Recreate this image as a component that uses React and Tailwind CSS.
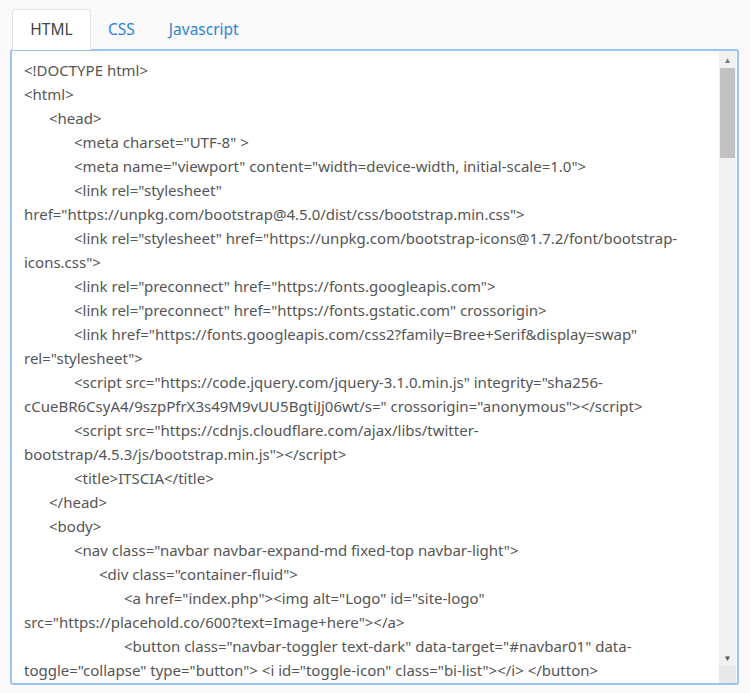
const code = `<!DOCTYPE html>
<html>
\t<head>
\t\t<meta charset="UTF-8" >
\t\t<meta name="viewport" content="width=device-width, initial-scale=1.0">
\t\t<link rel="stylesheet" href="https://unpkg.com/bootstrap@4.5.0/dist/css/bootstrap.min.css">
\t\t<link rel="stylesheet" href="https://unpkg.com/bootstrap-icons@1.7.2/font/bootstrap-icons.css">
\t\t<link rel="preconnect" href="https://fonts.googleapis.com">
\t\t<link rel="preconnect" href="https://fonts.gstatic.com" crossorigin>
\t\t<link href="https://fonts.googleapis.com/css2?family=Bree+Serif&display=swap" rel="stylesheet">
\t\t<script src="https://code.jquery.com/jquery-3.1.0.min.js" integrity="sha256-cCueBR6CsyA4/9szpPfrX3s49M9vUU5BgtiJj06wt/s=" crossorigin="anonymous"></script>
\t\t<script src="https://cdnjs.cloudflare.com/ajax/libs/twitter-bootstrap/4.5.3/js/bootstrap.min.js"></script>
\t\t<title>ITSCIA</title>
\t</head>
\t<body>
\t\t<nav class="navbar navbar-expand-md fixed-top navbar-light">
\t\t\t<div class="container-fluid">
\t\t\t\t<a href="index.php"><img alt="Logo" id="site-logo" src="https://placehold.co/600?text=Image+here"></a>
\t\t\t\t<button class="navbar-toggler text-dark" data-target="#navbar01" data-toggle="collapse" type="button"> <i id="toggle-icon" class="bi-list"></i> </button>
\t\t\t\t<div class="collapse navbar-collapse" id="navbar01">`;

export default function App() {
  return (
    <div className="w-[750px] h-[693px] bg-[#fafafa] overflow-hidden font-['Lato','Liberation_Sans',sans-serif]">
      <div className="flex pl-[12px] pt-[9px] text-[15.5px]">
        <div className="h-[41px] w-[79px] flex items-center justify-center bg-white border border-b-0 border-[#e3e3e3] rounded-t-[3px] text-[#444] relative z-10">HTML</div>
        <div className="h-[41px] px-[17px] flex items-center text-[#2d83d6]">CSS</div>
        <div className="h-[41px] px-[17px] flex items-center text-[#2d83d6]">Javascript</div>
      </div>
      <div className="ml-[10px] w-[729px] h-[636px] -mt-px border-2 border-[#9cc4ef] rounded-[3px] bg-white flex overflow-hidden relative">
        <div className="flex-1 pl-[12px] pr-[20px] pt-[7px] text-[15px] leading-[24px] text-[#555] whitespace-pre-wrap [tab-size:25px] overflow-hidden">
          {code}
        </div>
        <div className="w-[17px] mr-px flex flex-col bg-[#f1f1f1]">
          <div className="h-[17px] flex items-center justify-center text-[#777] text-[8px]">▲</div>
          <div className="mx-[1px] h-[90px] bg-[#c1c1c1]"></div>
          <div className="flex-1"></div>
          <div className="h-[17px] flex items-center justify-center text-[#555] text-[8px]">▼</div>
          <div className="h-[17px] bg-[#e8e8e8]"></div>
        </div>
      </div>
    </div>
  );
}
